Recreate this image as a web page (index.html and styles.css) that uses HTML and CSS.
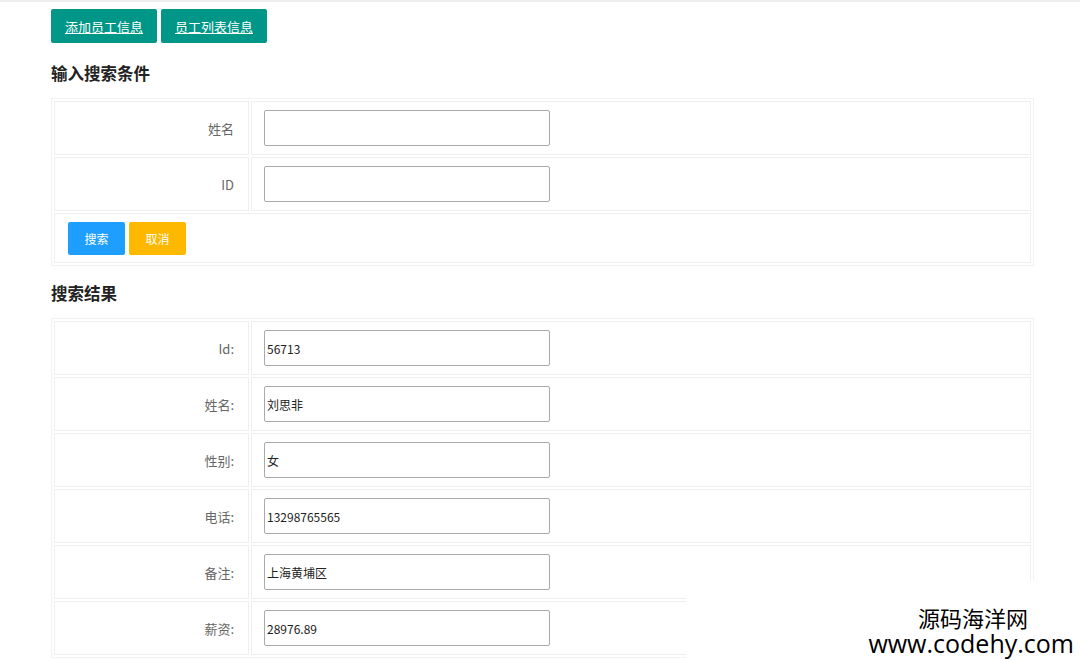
FILE: index.html
```
<!DOCTYPE html>
<html lang="zh">
<head>
<meta charset="utf-8">
<title>员工信息</title>
<link rel="stylesheet" href="styles.css">
</head>
<body>
<div class="page">
  <div class="nav">
    <a class="nav-btn" href="#">添加员工信息</a>
    <a class="nav-btn" href="#">员工列表信息</a>
  </div>
  <h2 class="title">输入搜索条件</h2>
  <table class="form-table">
    <tr><td class="lbl">姓名</td><td class="val"><input class="inp" type="text"></td></tr>
    <tr><td class="lbl">ID</td><td class="val"><input class="inp" type="text"></td></tr>
    <tr><td class="actions" colspan="2"><button class="btn blue">搜索</button><button class="btn orange">取消</button></td></tr>
  </table>
  <h2 class="title second">搜索结果</h2>
  <table class="form-table results">
    <tr><td class="lbl">Id:</td><td class="val"><input class="inp" type="text" value="56713"></td></tr>
    <tr><td class="lbl">姓名:</td><td class="val"><input class="inp" type="text" value="刘思非"></td></tr>
    <tr><td class="lbl">性别:</td><td class="val"><input class="inp" type="text" value="女"></td></tr>
    <tr><td class="lbl">电话:</td><td class="val"><input class="inp" type="text" value="13298765565"></td></tr>
    <tr><td class="lbl">备注:</td><td class="val"><input class="inp" type="text" value="上海黄埔区"></td></tr>
    <tr><td class="lbl">薪资:</td><td class="val"><input class="inp" type="text" value="28976.89"></td></tr>
  </table>
</div>
<div class="watermark">
  <div class="wm-cn">源码海洋网</div>
  <div class="wm-en">www.codehy.com</div>
</div>
</body>
</html>
```
FILE: styles.css
```
html, body {
  margin: 0;
  padding: 0;
  background: #fff;
  font-family: "Microsoft YaHei", "Noto Sans CJK SC", "Liberation Sans", sans-serif;
  color: #333;
}
body {
  border-top: 2px solid #eeeeee;
  height: 658px;
  overflow: hidden;
  position: relative;
}
.page {
  padding: 7px 0 0 51px;
}
.nav {
  display: flex;
  gap: 4px;
}
.nav-btn {
  display: flex;
  align-items: center;
  justify-content: center;
  width: 106px;
  height: 34px;
  background: #009688;
  color: #fff;
  font-size: 13px;
  text-decoration: underline;
  border-radius: 2px;
}
.title {
  margin: 19px 0 0 0;
  font-size: 16.5px;
  font-weight: bold;
  color: #222;
  line-height: 22px;
  height: 22px;
}
.title.second {
  margin-top: 16px;
}
.form-table {
  margin-top: 14px;
  width: 983px;
  border: 1px solid #f2f2f2;
  border-spacing: 2px;
  border-collapse: separate;
}
.form-table.results {
  margin-top: 14px;
}
.form-table td {
  border: 1px solid #efefef;
  padding: 0;
}
.lbl {
  width: 179px;
  height: 52px;
  text-align: right;
  padding-right: 14px !important;
  font-size: 13px;
  color: #666;
}
.val {
  padding: 0 0 0 12px !important;
  height: 52px;
}
.inp {
  display: block;
  box-sizing: border-box;
  width: 286px;
  height: 36px;
  border: 1px solid #a9a9a9;
  border-radius: 2px;
  padding: 0 2px;
  font-family: "Microsoft YaHei", "Noto Sans CJK SC", "Liberation Sans", sans-serif;
  font-size: 12px;
  color: #222;
  outline: none;
}
.actions {
  height: 48px;
  padding: 0 0 0 13px !important;
}
.btn {
  width: 57px;
  height: 33px;
  border: none;
  border-radius: 2px;
  color: #fff;
  font-size: 12px;
  margin-right: 4px;
  font-family: "Microsoft YaHei", "Noto Sans CJK SC", "Liberation Sans", sans-serif;
  vertical-align: middle;
}
.blue { background: #1e9fff; }
.orange { background: #ffb800; }
.watermark {
  position: absolute;
  right: 0;
  bottom: 0;
  width: 394px;
  height: 80px;
  background: rgba(255, 255, 255, 0.92);
  display: flex;
  flex-direction: column;
  align-items: flex-end;
  justify-content: flex-end;
  padding-right: 6px;
  box-sizing: border-box;
  color: #000;
}
.wm-cn {
  font-size: 22px;
  line-height: 24px;
  height: 24px;
  margin-right: 46px;
  font-family: "Noto Sans CJK SC", sans-serif;
}
.wm-en {
  font-size: 25px;
  line-height: 26px;
  height: 26px;
  margin-top: 1px;
  font-family: "Open Sans", "Noto Sans", sans-serif;
  margin-bottom: 4px;
}
```
